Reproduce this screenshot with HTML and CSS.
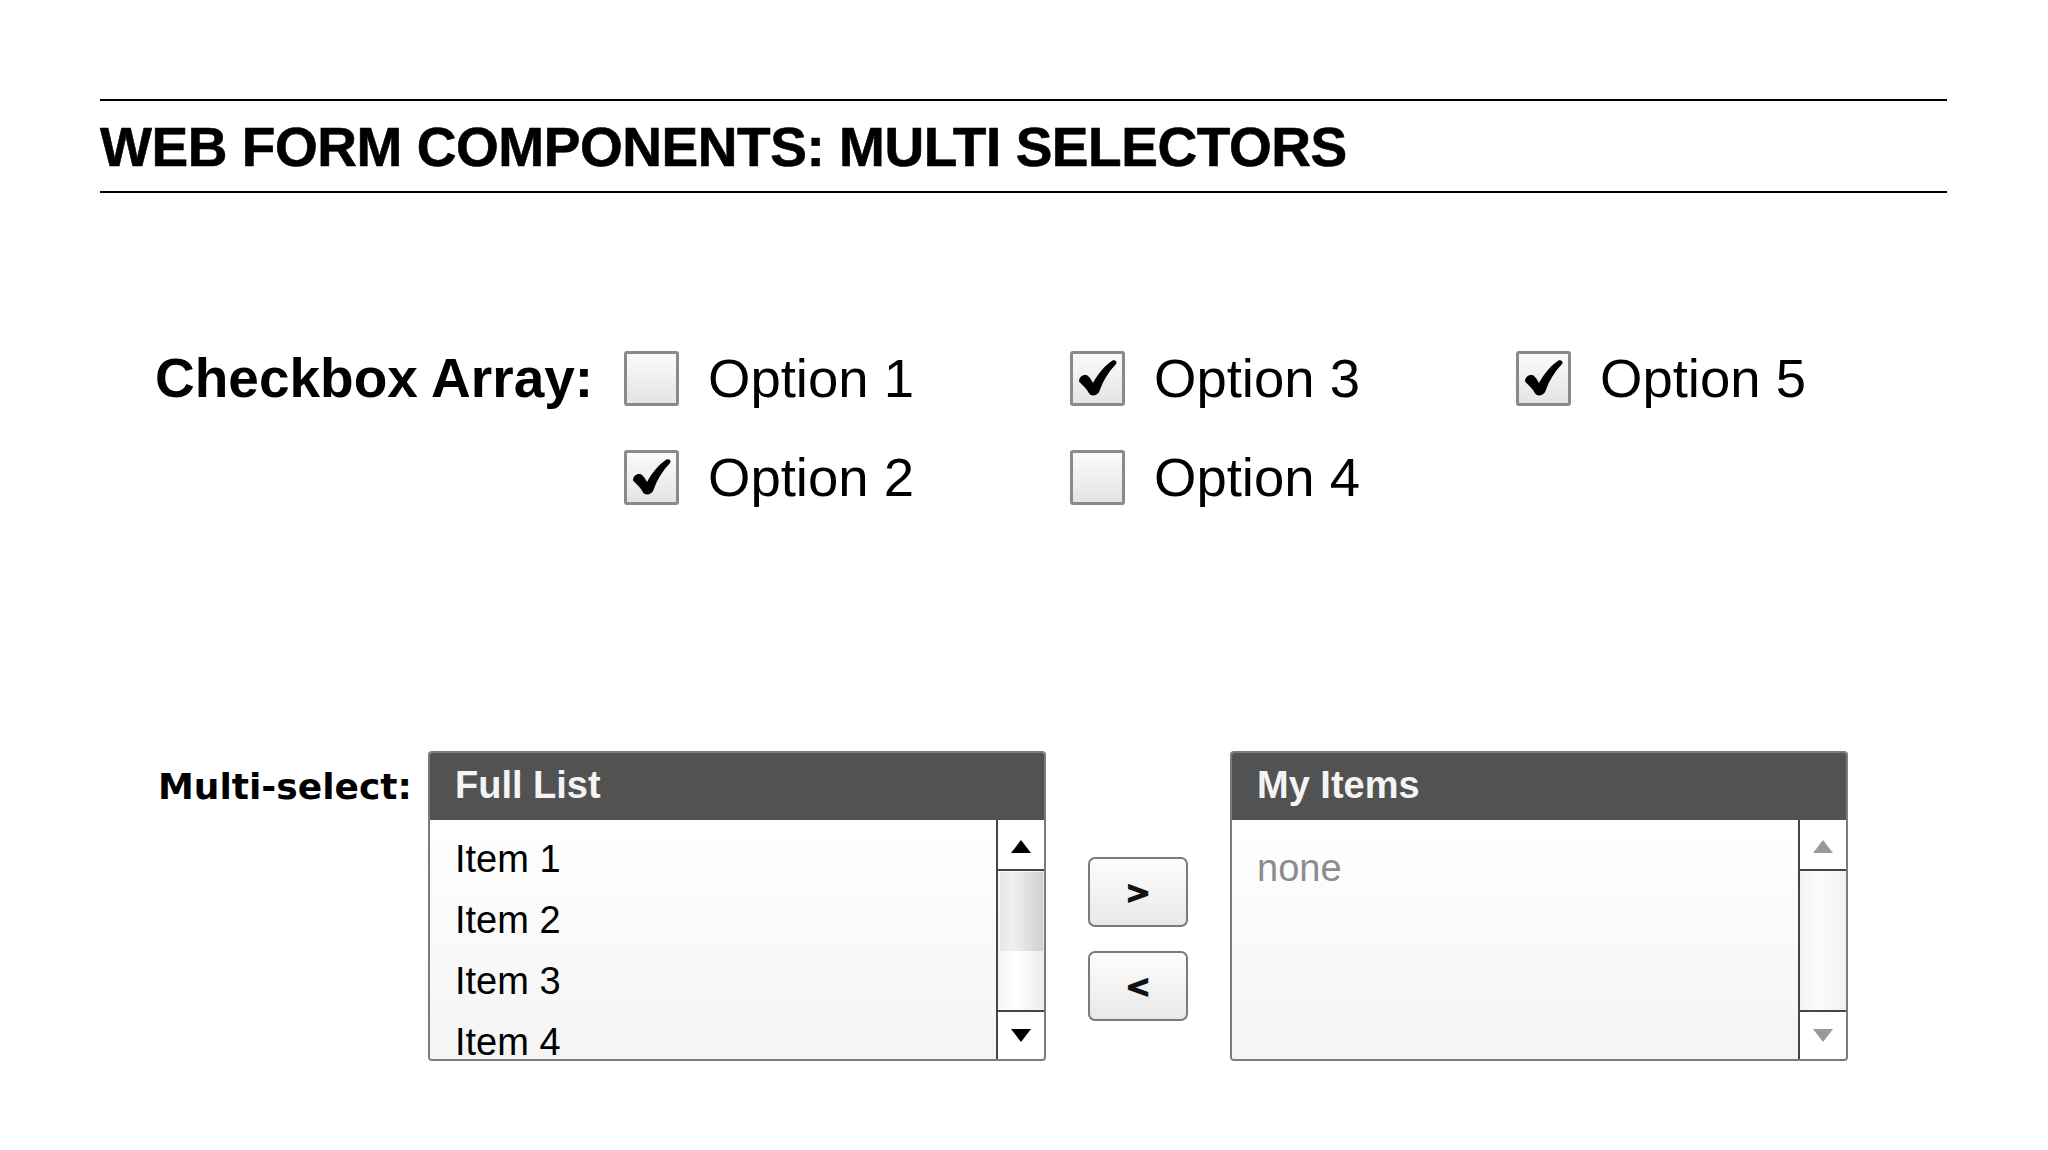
FILE: index.html
```html
<!DOCTYPE html>
<html lang="en">
<head>
<meta charset="utf-8">
<title>Web Form Components: Multi Selectors</title>
<link rel="stylesheet" href="styles.css">
</head>
<body>
<div class="page">
  <header class="title-bar">
    <h1>WEB FORM COMPONENTS: MULTI SELECTORS</h1>
  </header>

  <section class="checks">
    <div class="checks-label">Checkbox Array:</div>
    <label class="opt"><span class="box"></span><span>Option 1</span></label>
    <label class="opt"><span class="box"><svg class="tick" viewBox="0 0 38 36"><path d="M0,21.5 C0,15.5 6.5,13.5 9.5,16.5 C11.5,18.5 13,21 14,23 C20,12.5 27,4.5 33.5,0.6 C36.5,-0.8 39,2.2 36.6,4.6 C29.5,12 24,21 20.5,31 C18.8,36 11.5,37 9.8,33 C7.8,28.5 4,26 0,21.5 Z"/></svg></span><span>Option 2</span></label>
    <label class="opt"><span class="box"><svg class="tick" viewBox="0 0 38 36"><path d="M0,21.5 C0,15.5 6.5,13.5 9.5,16.5 C11.5,18.5 13,21 14,23 C20,12.5 27,4.5 33.5,0.6 C36.5,-0.8 39,2.2 36.6,4.6 C29.5,12 24,21 20.5,31 C18.8,36 11.5,37 9.8,33 C7.8,28.5 4,26 0,21.5 Z"/></svg></span><span>Option 3</span></label>
    <label class="opt"><span class="box"></span><span>Option 4</span></label>
    <label class="opt"><span class="box"><svg class="tick" viewBox="0 0 38 36"><path d="M0,21.5 C0,15.5 6.5,13.5 9.5,16.5 C11.5,18.5 13,21 14,23 C20,12.5 27,4.5 33.5,0.6 C36.5,-0.8 39,2.2 36.6,4.6 C29.5,12 24,21 20.5,31 C18.8,36 11.5,37 9.8,33 C7.8,28.5 4,26 0,21.5 Z"/></svg></span><span>Option 5</span></label>
  </section>

  <section class="multi">
    <div class="multi-label">Multi-select:</div>

    <div class="panel">
      <div class="panel-head">Full List</div>
      <div class="panel-body">
        <ul class="list">
          <li>Item 1</li>
          <li>Item 2</li>
          <li>Item 3</li>
          <li>Item 4</li>
        </ul>
        <div class="scrollbar">
          <div class="sb-btn sb-up"><span class="tri-up"></span></div>
          <div class="sb-track"><div class="sb-thumb"></div></div>
          <div class="sb-btn sb-down"><span class="tri-down"></span></div>
        </div>
      </div>
    </div>

    <div class="move-btns">
      <button class="move-btn" type="button">&gt;</button>
      <button class="move-btn" type="button">&lt;</button>
    </div>

    <div class="panel">
      <div class="panel-head">My Items</div>
      <div class="panel-body">
        <ul class="list list-empty">
          <li>none</li>
        </ul>
        <div class="scrollbar scrollbar-off">
          <div class="sb-btn sb-up"><span class="tri-up"></span></div>
          <div class="sb-track"></div>
          <div class="sb-btn sb-down"><span class="tri-down"></span></div>
        </div>
      </div>
    </div>
  </section>
</div>
</body>
</html>
```

FILE: styles.css
```css
html, body {
  margin: 0;
  padding: 0;
  background: #ffffff;
}

body {
  font-family: "Liberation Sans", Arial, sans-serif;
  color: #000;
}

.page {
  padding: 99px 101px 0 100px;
}

/* Title */
.title-bar {
  border-top: 2px solid #000;
  border-bottom: 2px solid #000;
  padding: 19px 0 16px 0;
}

.title-bar h1 {
  margin: 0;
  font-family: "Liberation Sans", Arial, sans-serif;
  font-weight: bold;
  font-size: 55px;
  line-height: 55px;
  letter-spacing: -0.45px;
  -webkit-text-stroke: 0.6px #000;
}

/* Checkbox array */
.checks {
  margin-top: 158px;
  padding-left: 55px;
  display: grid;
  grid-template-columns: 469px 446px 446px 446px;
  grid-template-rows: 55px 55px;
  row-gap: 44px;
  grid-auto-flow: column;
}

.checks-label {
  grid-row: 1 / span 2;
  align-self: start;
  font-weight: bold;
  font-size: 55px;
  line-height: 55px;
}

.opt {
  display: flex;
  align-items: center;
  gap: 29px;
  font-size: 54.5px;
  line-height: 55px;
}

.box {
  width: 55px;
  height: 55px;
  box-sizing: border-box;
  border: 3px solid #8a8a8a;
  border-radius: 3px;
  background: linear-gradient(#fbfbfb, #e4e4e4);
  display: flex;
  align-items: center;
  justify-content: center;
  flex: none;
}

.tick {
  width: 38px;
  height: 36px;
  flex: none;
  fill: #000;
  margin-left: 1px;
  margin-top: -1px;
}

/* Multi-select */
.multi {
  margin-top: 246px;
  padding-left: 58px;
  display: flex;
  align-items: flex-start;
}

.multi-label {
  width: 270px;
  flex: none;
  margin-top: 18px;
  font-family: "DejaVu Sans", Verdana, sans-serif;
  font-weight: bold;
  font-size: 36px;
  line-height: 36px;
}

.panel {
  width: 618px;
  height: 310px;
  box-sizing: border-box;
  border: 2px solid #7b7b7b;
  border-radius: 4px;
  display: flex;
  flex-direction: column;
  overflow: hidden;
  background: #fff;
  flex: none;
}

.panel-head {
  background: #525252;
  color: #f4f4f4;
  font-weight: bold;
  font-size: 38px;
  line-height: 38px;
  padding: 13px 0 16px 25px;
  flex: none;
}

.panel-body {
  flex: 1;
  display: flex;
  min-height: 0;
}

.list {
  flex: 1;
  margin: 0;
  list-style: none;
  padding: 9px 0 0 25px;
  font-size: 38px;
  line-height: 61px;
  overflow: hidden;
  background: linear-gradient(#ffffff, #f4f4f4);
}

.list-empty {
  padding-top: 18px;
  color: #8c8c8c;
}

.scrollbar {
  width: 46px;
  flex: none;
  border-left: 2px solid #454545;
  display: flex;
  flex-direction: column;
  background: #fff;
  box-shadow: inset -2px 0 0 #5a5a5a;
}

.sb-btn {
  display: flex;
  align-items: center;
  justify-content: center;
  background: #fff;
  flex: none;
}

.sb-up {
  height: 49px;
  border-bottom: 2px solid #454545;
}

.sb-down {
  height: 47px;
  border-top: 2px solid #454545;
}

.sb-track {
  flex: 1;
  padding: 1px 1px 0 2px;
  background: linear-gradient(90deg, #f6f6f6, #ffffff 40%, #ececec);
}

.sb-thumb {
  height: 79px;
  background: linear-gradient(90deg, #e6e6e6, #f0f0f0 30%, #d0d0d0);
}

.tri-up {
  width: 0;
  height: 0;
  border-left: 10px solid transparent;
  border-right: 10px solid transparent;
  border-bottom: 13px solid #000;
  margin-top: 3px;
}

.tri-down {
  width: 0;
  height: 0;
  border-left: 10px solid transparent;
  border-right: 10px solid transparent;
  border-top: 13px solid #000;
}

.scrollbar-off .tri-up {
  border-bottom-color: #999;
}

.scrollbar-off .tri-down {
  border-top-color: #999;
}

.scrollbar-off .sb-track {
  background: linear-gradient(90deg, #f3f3f3, #fbfbfb 40%, #f1f1f1);
}

.move-btns {
  flex: none;
  display: flex;
  flex-direction: column;
  gap: 24px;
  margin: 106px 42px 0 42px;
}

.move-btn {
  appearance: none;
  width: 100px;
  height: 70px;
  box-sizing: border-box;
  border: 2px solid #7b7b7b;
  border-radius: 7px;
  background: linear-gradient(#fdfdfd, #e8e8e8);
  font-family: "DejaVu Sans", Verdana, sans-serif;
  font-weight: bold;
  font-size: 30px;
  color: #111;
  -webkit-text-stroke: 1.4px #111;
  padding: 0;
  margin: 0;
  display: flex;
  align-items: center;
  justify-content: center;
}
```
